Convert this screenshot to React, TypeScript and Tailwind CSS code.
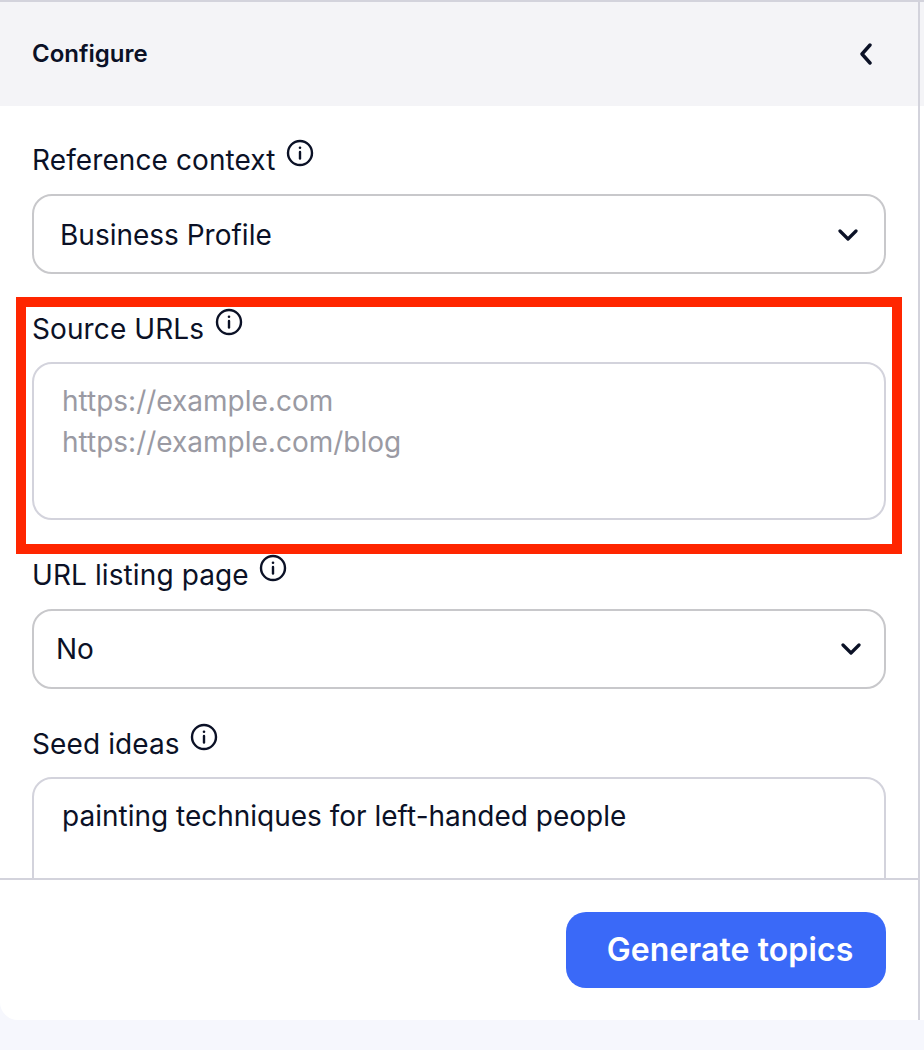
import React from "react";

const Info = () => (
  <svg width="28" height="28" viewBox="0 0 28 28" fill="none" stroke="#0b1126" strokeWidth="2.4" strokeLinecap="round" className="shrink-0">
    <circle cx="14" cy="14" r="12" />
    <path d="M14 13v6.5" />
    <circle cx="14" cy="8.8" r="1.3" fill="#0b1126" stroke="none" />
  </svg>
);

const Chevron = () => (
  <svg width="20" height="12" viewBox="0 0 20 12" fill="none" stroke="#0b1126" strokeWidth="3.2" strokeLinecap="round" strokeLinejoin="round">
    <path d="M2 2l8 8 8-8" />
  </svg>
);

const Label = ({ text, mt }: { text: string; mt: string }) => (
  <div className={`flex items-start gap-[10.5px] h-[36px] text-[28px] tracking-[0.1px] leading-[36px] text-[#0b1126] ${mt}`}>
    <span>{text}</span>
    <span className="-mt-[3px]"><Info /></span>
  </div>
);

const Select = ({ value, pl, pr, mt }: { value: string; pl: string; pr: string; mt: string }) => (
  <div className={`h-[80px] rounded-[20px] border-2 border-[#c8c8cb] flex items-center justify-between text-[28px] text-[#0b1126] ${mt} ${pl} ${pr}`}>
    <span>{value}</span>
    <Chevron />
  </div>
);

export default function App() {
  return (
    <div className="relative w-[924px] h-[1050px] bg-[#f6f7fd] font-['Inter',sans-serif] overflow-hidden">
      <div className="w-[924px] h-[1020px] bg-white border-t-2 border-[#d3d3dc] rounded-bl-[18px] flex overflow-hidden">
        <div className="w-[920px] shrink-0 border-r-2 border-[#d3d3dc] flex flex-col">
          <div className="h-[104px] shrink-0 bg-[#f4f4f7] flex items-center justify-between pl-[32px] pr-[45px]">
            <span className="text-[24px] font-semibold text-[#0b1126]">Configure</span>
            <svg width="14" height="22" viewBox="0 0 14 22" fill="none" stroke="#0b1126" strokeWidth="3.4" strokeLinecap="round" strokeLinejoin="round">
              <path d="M11 2L3 11l8 9" />
            </svg>
          </div>
          <div className="flex-1 min-h-0 overflow-hidden pl-[32px] pr-[32px] pt-[36px]">
            <Label text="Reference context" mt="" />
            <Select value="Business Profile" pl="pl-[26px] pt-[1px]" pr="pr-[26px]" mt="mt-[16px]" />
            <Label text="Source URLs" mt="mt-[37px]" />
            <div className="mt-[15px] h-[158px] rounded-[20px] border-2 border-[#d3d3dc] pl-[28px] pt-[17px] text-[28px] leading-[41px] text-[#9a9aa3]">
              <div>https://example.com</div>
              <div>https://example.com/blog</div>
            </div>
            <Label text="URL listing page" mt="mt-[37px]" />
            <Select value="No" pl="pl-[22px]" pr="pr-[23px]" mt="mt-[16px]" />
            <Label text="Seed ideas" mt="mt-[37px]" />
            <div className="mt-[15px] h-[158px] rounded-[20px] border-2 border-[#d3d3dc] pl-[28px] pt-[17px] text-[28px] leading-[41px] text-[#0b1126]">
              painting techniques for left-handed people
            </div>
          </div>
          <div className="h-[142px] shrink-0 border-t-2 border-[#d3d3dc] flex justify-end items-start pt-[32px] pr-[32px]">
            <button className="w-[320px] h-[76px] rounded-[20px] bg-[#3a69f8] text-white text-[32px] font-semibold tracking-[0.1px] pl-[8px]">
              Generate topics
            </button>
          </div>
        </div>
        <div className="flex-1">
          <div className="h-[104px] bg-[#f4f4f7]" />
        </div>
      </div>
      <div className="absolute left-[16px] top-[297px] w-[886px] h-[257px] border-[10px] border-[#ff2600] pointer-events-none" />
    </div>
  );
}
